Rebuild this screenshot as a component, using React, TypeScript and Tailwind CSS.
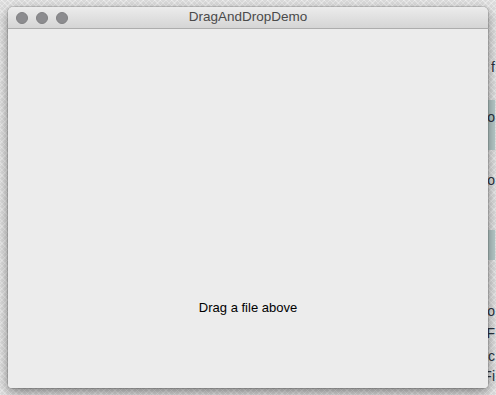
import React from "react"

const behindRows = [
  { top: 60, text: "Drop files f" },
  { top: 110, text: "Demo" },
  { top: 173, text: "Undo" },
  { top: 304, text: "Erro" },
  { top: 326, text: "Open F" },
  { top: 349, text: "Doc" },
  { top: 369, text: "Fi" },
]

export default function App() {
  return (
    <div
      className="relative w-[496px] h-[395px] overflow-hidden bg-[#dcdcdc]"
      style={{
        backgroundImage:
          "repeating-linear-gradient(45deg, rgba(255,255,255,0.35) 0 1px, transparent 1px 4px), repeating-linear-gradient(-45deg, rgba(255,255,255,0.35) 0 1px, transparent 1px 4px)",
        fontFamily: '"Liberation Sans", Arial, sans-serif',
      }}
    >
      {/* window behind */}
      <div className="absolute left-[300px] top-0 w-[195px] h-[395px]">
        <div className="absolute left-0 top-[100px] w-full h-[50px] bg-[#b8cbca]" />
        <div className="absolute left-0 top-[230px] w-full h-[30px] bg-[#b8cbca]" />
        {behindRows.map((r, i) => (
          <div
            key={i}
            className="absolute right-0 text-[14px] text-[#2b3440] leading-none whitespace-nowrap"
            style={{ top: r.top }}
          >
            {r.text}
          </div>
        ))}
      </div>

      {/* front window */}
      <div className="absolute left-[8px] top-[7px] w-[480px] h-[381px] flex flex-col rounded-t-[5px] rounded-b-[4px] overflow-hidden shadow-[0_4px_12px_rgba(0,0,0,0.45),0_0_0_1px_rgba(0,0,0,0.12)]">
        <div className="relative h-[22px] flex items-center bg-gradient-to-b from-[#ececec] to-[#d5d5d5] border-b border-[#adadad]">
          <div className="flex gap-[8px] pl-[8px]">
            <span className="w-[12px] h-[12px] rounded-full bg-[#8c8c8f] border border-[#808083]" />
            <span className="w-[12px] h-[12px] rounded-full bg-[#8c8c8f] border border-[#808083]" />
            <span className="w-[12px] h-[12px] rounded-full bg-[#8c8c8f] border border-[#808083]" />
          </div>
          <div className="absolute inset-0 flex items-center justify-center text-[13.5px] text-[#4a4a4a]">
            DragAndDropDemo
          </div>
        </div>
        <div className="flex-1 flex flex-col items-center justify-end bg-[#ececec] pb-[74px]">
          <div className="text-[13px] text-black leading-none">Drag a file above</div>
        </div>
      </div>
    </div>
  )
}
